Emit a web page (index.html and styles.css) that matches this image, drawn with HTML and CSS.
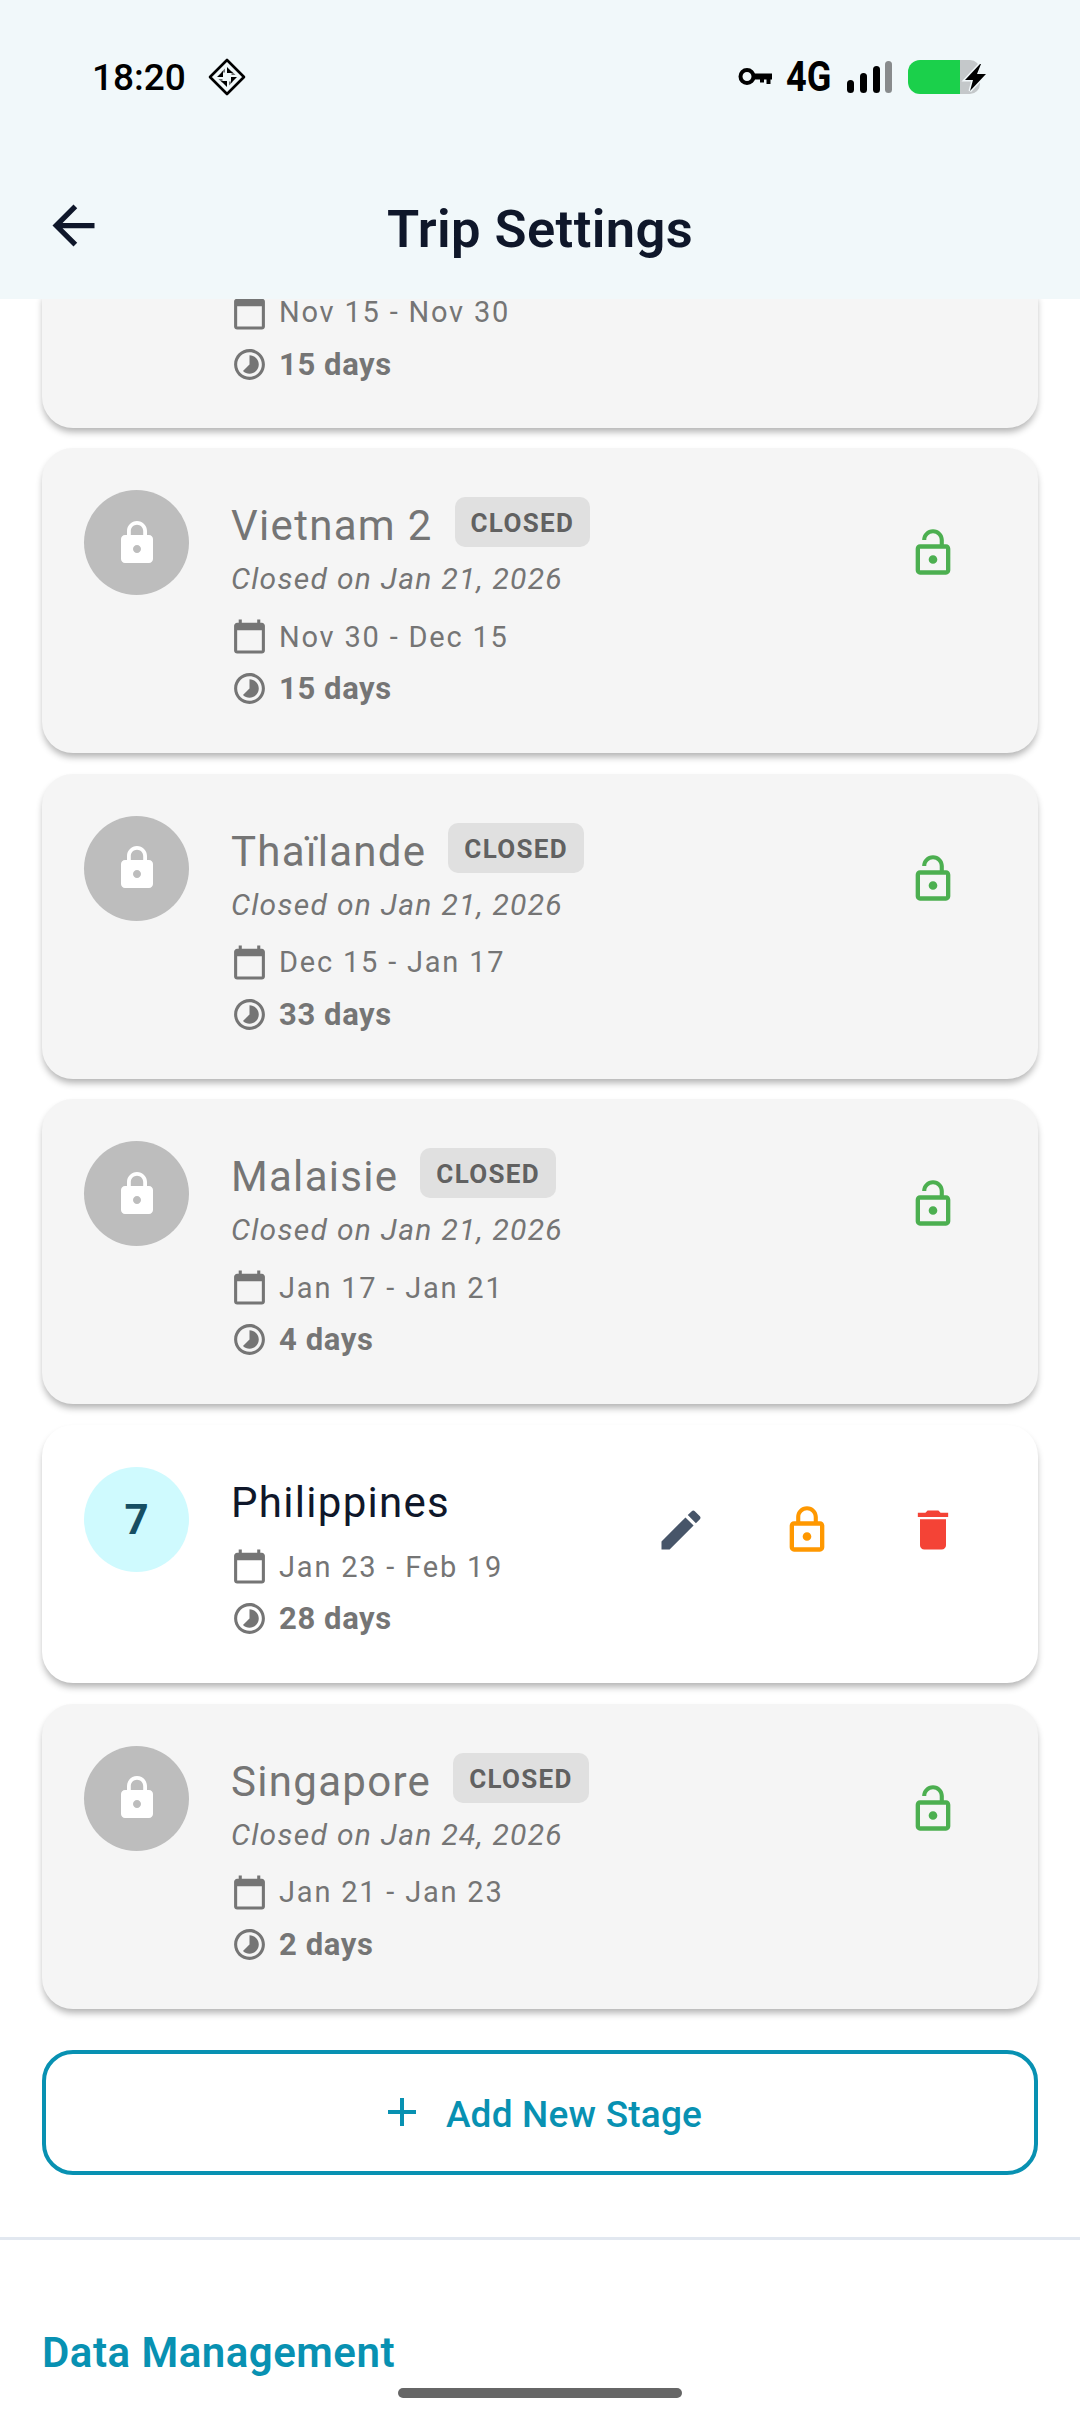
FILE: index.html
```html
<!DOCTYPE html>
<html lang="en">
<head>
    <meta charset="UTF-8">
    <meta name="viewport" content="width=device-width, initial-scale=1.0">
    <title>Trip Settings</title>
    <link rel="stylesheet" href="styles.css">
</head>
<body>
    <svg class="sprite" xmlns="http://www.w3.org/2000/svg">
        <symbol id="i-lock" viewBox="0 0 24 24"><path d="M18 8h-1V6c0-2.76-2.24-5-5-5S7 3.24 7 6v2H6c-1.1 0-2 .9-2 2v10c0 1.1.9 2 2 2h12c1.1 0 2-.9 2-2V10c0-1.1-.9-2-2-2zm-6 9c-1.1 0-2-.9-2-2s.9-2 2-2 2 .9 2 2-.9 2-2 2zm3.1-9H8.9V6c0-1.71 1.39-3.1 3.1-3.1 1.71 0 3.1 1.39 3.1 3.1v2z"/></symbol>
        <symbol id="i-lock-outline" viewBox="0 0 24 24"><path d="M12 17c1.1 0 2-.9 2-2s-.9-2-2-2-2 .9-2 2 .9 2 2 2zm6-9h-1V6c0-2.76-2.24-5-5-5S7 3.24 7 6v2H6c-1.1 0-2 .9-2 2v10c0 1.1.9 2 2 2h12c1.1 0 2-.9 2-2V10c0-1.1-.9-2-2-2zM8.9 6c0-1.71 1.39-3.1 3.1-3.1s3.1 1.39 3.1 3.1v2H8.9V6zM18 20H6V10h12v10z"/></symbol>
        <symbol id="i-lock-open" viewBox="0 0 24 24"><path d="M12 17c1.1 0 2-.9 2-2s-.9-2-2-2-2 .9-2 2 .9 2 2 2zm6-9h-1V6c0-2.76-2.24-5-5-5S7 3.24 7 6h1.9c0-1.71 1.39-3.1 3.1-3.1 1.71 0 3.1 1.39 3.1 3.1v2H6c-1.1 0-2 .9-2 2v10c0 1.1.9 2 2 2h12c1.1 0 2-.9 2-2V10c0-1.1-.9-2-2-2zm0 12H6V10h12v10z"/></symbol>
        <symbol id="i-edit" viewBox="0 0 24 24"><path d="M3 17.25V21h3.75L17.81 9.94l-3.75-3.75L3 17.25zM20.71 7.04c.39-.39.39-1.02 0-1.41l-2.34-2.34c-.39-.39-1.02-.39-1.41 0l-1.83 1.83 3.75 3.75 1.83-1.83z"/></symbol>
        <symbol id="i-delete" viewBox="0 0 24 24"><path d="M6 19c0 1.1.9 2 2 2h8c1.1 0 2-.9 2-2V7H6v12zM19 4h-3.5l-1-1h-5l-1 1H5v2h14V4z"/></symbol>
        <symbol id="i-calendar" viewBox="0 0 24 24"><path d="M20 3h-1V1h-2v2H7V1H5v2H4c-1.1 0-2 .9-2 2v16c0 1.1.9 2 2 2h16c1.1 0 2-.9 2-2V5c0-1.1-.9-2-2-2zm0 18H4V8h16v13z"/></symbol>
        <symbol id="i-timelapse" viewBox="0 0 24 24"><path d="M16.24 7.76C15.07 6.59 13.54 6 12 6v6l-4.24 4.24c2.34 2.34 6.14 2.34 8.49 0 2.34-2.34 2.34-6.14-.01-8.48zM12 2C6.48 2 2 6.48 2 12s4.48 10 10 10 10-4.48 10-10S17.52 2 12 2zm0 18c-4.42 0-8-3.58-8-8s3.58-8 8-8 8 3.58 8 8-3.58 8-8 8z"/></symbol>
    </svg>

    <div class="app">
        <header class="top">
            <div class="status">
                <div class="status-left">
                    <span class="time">18:20</span>
                    <svg class="diamond" viewBox="0 0 38 38">
                        <path d="M19 2 36 19 19 36 2 19Z" fill="none" stroke="#000" stroke-width="2.6" stroke-linejoin="round"/>
                        <path d="M19 9 25 15H19ZM29 19 23 25V19ZM19 29 13 23H19ZM9 19 15 13V19Z" fill="#000"/>
                        <path d="M17 10.500 13 14.500H17ZM27.500 17 23.500 13V17ZM21 27.500 25 23.500H21ZM10.500 21 14.500 25V21Z" fill="#000" opacity="0.55"/>
                    </svg>
                </div>
                <div class="status-right">
                    <svg class="key" viewBox="0 0 34 20">
                        <circle cx="9" cy="9.500" r="6.500" fill="none" stroke="#000" stroke-width="4"/>
                        <path d="M15 6.500h19v6h-1.500v4.500h-4v-4.500h-2.500v3h-4v-3h-7z" fill="#000"/>
                    </svg>
                    <span class="net">4G</span>
                    <svg class="signal" viewBox="0 0 45 32">
                        <rect x="0" y="19" width="7" height="13" rx="3.5" fill="#000"/>
                        <rect x="13" y="12" width="7" height="20" rx="3.5" fill="#000"/>
                        <rect x="26" y="5" width="7" height="27" rx="3.5" fill="#000"/>
                        <rect x="38" y="0" width="7" height="32" rx="3.5" fill="#888b8c"/>
                    </svg>
                    <svg class="battery" viewBox="0 0 80 34">
                        <path d="M12 0h50a10 10 0 0 1 10 10v14a10 10 0 0 1-10 10H52V0z" fill="#c4c8ca"/>
                        <path d="M12 0h40v34H12A12 12 0 0 1 0 22V12A12 12 0 0 1 12 0z" fill="#1bd04b"/>
                        <path d="M72 4 57 20h8l-3 11 16-17h-9l4-10z" fill="#000" stroke="#f1f8fa" stroke-width="3" paint-order="stroke"/>
                    </svg>
                </div>
            </div>
            <div class="toolbar">
                <svg class="back" viewBox="0 0 24 24"><path d="M20 11H7.83l5.59-5.59L12 4l-8 8 8 8 1.41-1.41L7.83 13H20v-2z"/></svg>
                <h1 class="page-title">Trip Settings</h1>
            </div>
        </header>

        <main class="scroll">
            <section class="stages">
                <!-- scrolled under the header, only the dates still show -->
                <article class="stage stage-closed stage-clipped">
                    <div class="info">
                        <div class="meta"><svg class="meta-icon"><use href="#i-calendar"/></svg>Nov 15 - Nov 30</div>
                        <div class="meta meta-days"><svg class="meta-icon"><use href="#i-timelapse"/></svg>15 days</div>
                    </div>
                </article>

                <article class="stage stage-closed">
                    <div class="avatar"><svg class="avatar-lock"><use href="#i-lock"/></svg></div>
                    <div class="info">
                        <div class="name-row"><span class="name">Vietnam 2</span><span class="badge">CLOSED</span></div>
                        <p class="closed-on">Closed on Jan 21, 2026</p>
                        <div class="meta"><svg class="meta-icon"><use href="#i-calendar"/></svg>Nov 30 - Dec 15</div>
                        <div class="meta meta-days"><svg class="meta-icon"><use href="#i-timelapse"/></svg>15 days</div>
                    </div>
                    <div class="actions"><span class="action action-open"><svg><use href="#i-lock-open"/></svg></span></div>
                </article>

                <article class="stage stage-closed">
                    <div class="avatar"><svg class="avatar-lock"><use href="#i-lock"/></svg></div>
                    <div class="info">
                        <div class="name-row"><span class="name">Thaïlande</span><span class="badge">CLOSED</span></div>
                        <p class="closed-on">Closed on Jan 21, 2026</p>
                        <div class="meta"><svg class="meta-icon"><use href="#i-calendar"/></svg>Dec 15 - Jan 17</div>
                        <div class="meta meta-days"><svg class="meta-icon"><use href="#i-timelapse"/></svg>33 days</div>
                    </div>
                    <div class="actions"><span class="action action-open"><svg><use href="#i-lock-open"/></svg></span></div>
                </article>

                <article class="stage stage-closed">
                    <div class="avatar"><svg class="avatar-lock"><use href="#i-lock"/></svg></div>
                    <div class="info">
                        <div class="name-row"><span class="name">Malaisie</span><span class="badge">CLOSED</span></div>
                        <p class="closed-on">Closed on Jan 21, 2026</p>
                        <div class="meta"><svg class="meta-icon"><use href="#i-calendar"/></svg>Jan 17 - Jan 21</div>
                        <div class="meta meta-days"><svg class="meta-icon"><use href="#i-timelapse"/></svg>4 days</div>
                    </div>
                    <div class="actions"><span class="action action-open"><svg><use href="#i-lock-open"/></svg></span></div>
                </article>

                <article class="stage">
                    <div class="avatar avatar-active">7</div>
                    <div class="info">
                        <div class="name-row"><span class="name">Philippines</span></div>
                        <div class="meta"><svg class="meta-icon"><use href="#i-calendar"/></svg>Jan 23 - Feb 19</div>
                        <div class="meta meta-days"><svg class="meta-icon"><use href="#i-timelapse"/></svg>28 days</div>
                    </div>
                    <div class="actions">
                        <span class="action action-edit"><svg><use href="#i-edit"/></svg></span>
                        <span class="action action-lock"><svg><use href="#i-lock-outline"/></svg></span>
                        <span class="action action-delete"><svg><use href="#i-delete"/></svg></span>
                    </div>
                </article>

                <article class="stage stage-closed">
                    <div class="avatar"><svg class="avatar-lock"><use href="#i-lock"/></svg></div>
                    <div class="info">
                        <div class="name-row"><span class="name">Singapore</span><span class="badge">CLOSED</span></div>
                        <p class="closed-on">Closed on Jan 24, 2026</p>
                        <div class="meta"><svg class="meta-icon"><use href="#i-calendar"/></svg>Jan 21 - Jan 23</div>
                        <div class="meta meta-days"><svg class="meta-icon"><use href="#i-timelapse"/></svg>2 days</div>
                    </div>
                    <div class="actions"><span class="action action-open"><svg><use href="#i-lock-open"/></svg></span></div>
                </article>
            </section>

            <button class="add-btn">
                <svg class="add-icon" viewBox="0 0 24 24"><path d="M19 13h-6v6h-2v-6H5v-2h6V5h2v6h6v2z"/></svg>
                Add New Stage
            </button>

            <hr class="divider">
            <h2 class="section-title">Data Management</h2>
        </main>

        <div class="home-bar"></div>
    </div>
</body>
</html>
```

FILE: styles.css
```css
* {
    box-sizing: border-box;
}
body {
    margin: 0;
    font-family: Roboto, 'Liberation Sans', sans-serif;
    background: #fff;
    color: #0f172a;
}
.sprite {
    display: none;
}
.app {
    position: relative;
    display: flex;
    flex-direction: column;
    height: 2424px;
    overflow: hidden;
}

/* header */
.top {
    flex: none;
    height: 299px;
    background: #f1f8fa;
}
.status {
    display: flex;
    justify-content: space-between;
    align-items: center;
    height: 154px;
    padding: 0 92px 0 92px;
    color: #000;
}
.status-left, .status-right {
    display: flex;
    align-items: center;
}
.time {
    font-size: 37px;
    font-weight: 500;
}
.diamond {
    width: 38px;
    height: 38px;
    margin-left: 22px;
}
.key {
    width: 34px;
    height: 20px;
}
.net {
    width: 46px;
    margin-left: 14px;
    font-size: 42px;
    font-weight: 700;
    line-height: 40px;
    transform: scaleX(0.86);
    transform-origin: left center;
    white-space: nowrap;
}
.signal {
    width: 45px;
    height: 32px;
    margin-left: 15px;
}
.battery {
    width: 80px;
    height: 34px;
    margin-left: 16px;
}
.toolbar {
    position: relative;
    display: flex;
    align-items: center;
    justify-content: center;
    height: 145px;
}
.back {
    position: absolute;
    left: 42px;
    top: 40px;
    width: 63px;
    height: 63px;
    fill: #0f172a;
}
.page-title {
    margin: 4px 0 0;
    font-size: 52.5px;
    font-weight: 600;
    letter-spacing: 0.4px;
}

/* stage list */
.scroll {
    flex: 1;
    overflow: hidden;
}
.stages {
    display: flex;
    flex-direction: column;
    gap: 20.5px;
    margin-top: -6px;
    padding: 0 42px;
}
.stage {
    display: flex;
    align-items: flex-start;
    padding: 42px 42px 45.5px;
    background: #fff;
    border-radius: 31px;
    box-shadow: 0 5px 7px -1px rgba(0, 0, 0, 0.3);
}
.stage-closed {
    background: #f5f5f5;
}
.stage-clipped {
    padding-top: 0;
    padding-bottom: 44.5px;
    padding-left: 189px;
    border-radius: 0 0 31px 31px;
}
.stage-clipped .info {
    margin-left: 0;
    padding-top: 0;
}
.stage-clipped .meta:first-child {
    margin-top: 0;
    line-height: 1;
}
.avatar {
    flex: none;
    display: flex;
    align-items: center;
    justify-content: center;
    width: 105px;
    height: 105px;
    border-radius: 50%;
    background: #bdbdbd;
}
.avatar-lock {
    width: 48px;
    height: 48px;
    fill: #fff;
}
.avatar-active {
    background: #cffafe;
    color: #164e63;
    font-size: 42px;
    font-weight: 700;
}
.info {
    flex: 1;
    padding-top: 7px;
    margin-left: 42px;
}
.name-row {
    display: flex;
    align-items: flex-start;
    height: 56px;
}
.name {
    padding-top: 1px;
    font-size: 42px;
    line-height: 56px;
    letter-spacing: 1.3px;
}
.stage-closed .name {
    color: #757575;
}
.badge {
    height: 50px;
    margin-left: 22px;
    padding: 0 16px;
    border-radius: 10px;
    background: #e0e0e0;
    color: #616161;
    font-size: 26px;
    font-weight: 700;
    line-height: 53px;
    letter-spacing: 1.3px;
}
.closed-on {
    margin: 6px 0 18.5px;
    color: #757575;
    font-size: 30px;
    font-style: italic;
    line-height: 40px;
    letter-spacing: 1.3px;
}
.meta {
    display: flex;
    align-items: center;
    height: 38px;
    margin-top: 18px;
    color: #757575;
    font-size: 29px;
    letter-spacing: 1.8px;
}
.closed-on + .meta {
    margin-top: 0;
}
.meta-days {
    margin-top: 14px;
    font-size: 31px;
    font-weight: 700;
    letter-spacing: 0.6px;
}
.meta-icon {
    flex: none;
    width: 37px;
    height: 37px;
    margin-right: 11px;
    fill: #757575;
}
.actions {
    display: flex;
}
.action {
    display: flex;
    align-items: center;
    justify-content: center;
    width: 126px;
    height: 126px;
}
.action svg {
    width: 52px;
    height: 52px;
}
.action-open {
    fill: #4caf50;
}
.action-edit {
    fill: #475569;
}
.action-lock {
    fill: #ff9800;
}
.action-delete {
    fill: #f44336;
}

/* add button and next section */
.add-btn {
    display: flex;
    align-items: center;
    justify-content: center;
    width: 996px;
    height: 125px;
    margin: 41.5px 42px 0;
    padding-top: 4px;
    background: #fff;
    border: 4px solid #0891b2;
    border-radius: 31px;
    color: #0891b2;
    font-family: inherit;
    font-size: 37px;
    font-weight: 500;
    letter-spacing: 0.2px;
}
.add-icon {
    width: 48px;
    height: 48px;
    margin-right: 20px;
    margin-bottom: 4px;
    fill: #0891b2;
}
.divider {
    height: 3px;
    margin: 62px 0 0;
    border: 0;
    background: #e2e8f0;
}
.section-title {
    margin: 87.5px 42px 0;
    color: #0891b2;
    font-size: 42px;
    font-weight: 600;
    letter-spacing: 0.5px;
}
.home-bar {
    position: absolute;
    left: 398px;
    top: 2388px;
    width: 284px;
    height: 10px;
    border-radius: 5px;
    background: #666;
}
```
